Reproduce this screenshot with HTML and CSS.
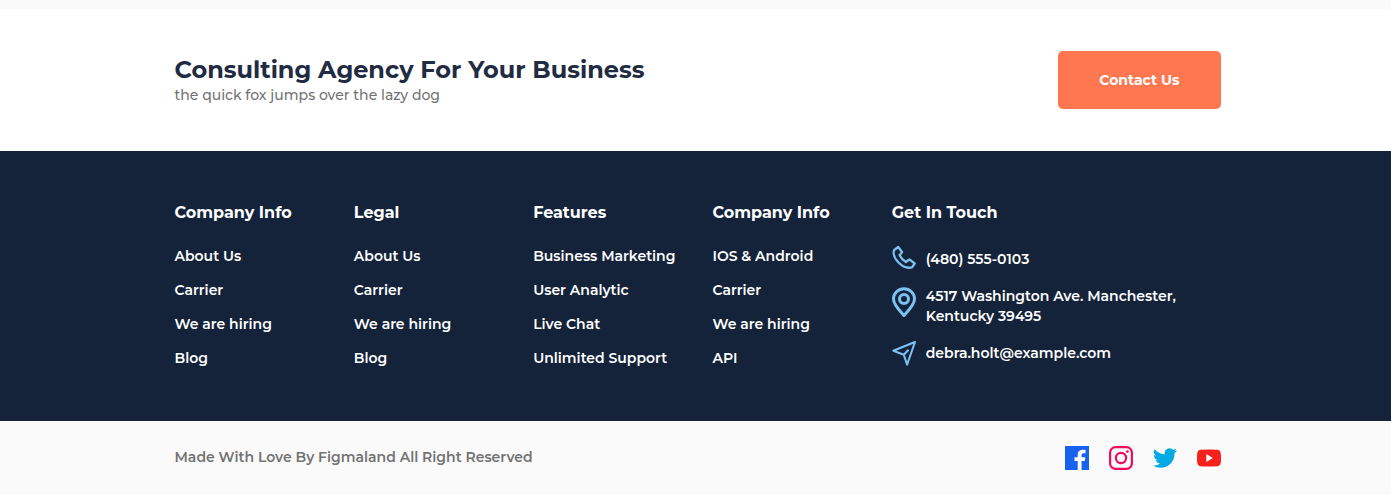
FILE: index.html
```html
<!DOCTYPE html>
<html lang="en">
<head>
<meta charset="utf-8">
<meta name="viewport" content="width=device-width, initial-scale=1">
<title>Consulting Agency</title>
<link rel="stylesheet" href="styles.css">
</head>
<body>
<section class="cta">
  <div class="container cta-row">
    <div>
      <h2 class="cta-title">Consulting Agency For Your Business</h2>
      <p class="cta-text">the quick fox jumps over the lazy dog</p>
    </div>
    <button class="cta-button" type="button">Contact Us</button>
  </div>
</section>
<footer>
  <div class="footer-main">
    <div class="container footer-grid">
      <nav aria-label="Company Info">
        <h3 class="column-title">Company Info</h3>
        <ul class="links">
          <li><a href="#">About Us</a></li>
          <li><a href="#">Carrier</a></li>
          <li><a href="#">We are hiring</a></li>
          <li><a href="#">Blog</a></li>
        </ul>
      </nav>
      <nav aria-label="Legal">
        <h3 class="column-title">Legal</h3>
        <ul class="links">
          <li><a href="#">About Us</a></li>
          <li><a href="#">Carrier</a></li>
          <li><a href="#">We are hiring</a></li>
          <li><a href="#">Blog</a></li>
        </ul>
      </nav>
      <nav aria-label="Features">
        <h3 class="column-title">Features</h3>
        <ul class="links">
          <li><a href="#">Business Marketing</a></li>
          <li><a href="#">User Analytic</a></li>
          <li><a href="#">Live Chat</a></li>
          <li><a href="#">Unlimited Support</a></li>
        </ul>
      </nav>
      <nav aria-label="Company Info">
        <h3 class="column-title">Company Info</h3>
        <ul class="links">
          <li><a href="#">IOS &amp; Android</a></li>
          <li><a href="#">Carrier</a></li>
          <li><a href="#">We are hiring</a></li>
          <li><a href="#">API</a></li>
        </ul>
      </nav>
      <div>
        <h3 class="column-title">Get In Touch</h3>
        <ul class="contacts">
          <li>
            <svg class="contact-icon" width="24" height="26" viewBox="0 1 24 26" aria-hidden="true"><path d="M6.200 2 2.100 5.100C.8 8.800 2.800 13.900 6.500 17.500c3.900 3.900 9 6.100 13.500 4.800l2.700-3.800-5.300-4.100-3.400 2.600C11.500 15.600 9 13 7.600 10.200L10.100 7.100Z" stroke-width="2.300"/></svg>
            <span>(480) 555-0103</span>
          </li>
          <li class="address">
            <svg class="contact-icon" width="24" height="31" viewBox="0 -1 24 31" aria-hidden="true"><path d="M12 28.500C9 25 1.500 18 1.500 12a10.500 10.200 0 0 1 21 0C22.500 18 15 25 12 28.500Z" stroke-width="3"/><circle cx="12" cy="12" r="4.500" stroke-width="3"/></svg>
            <span>4517 Washington Ave. Manchester,<br>Kentucky 39495</span>
          </li>
          <li>
            <svg class="contact-icon" width="24" height="26" viewBox="0 0 24 26" aria-hidden="true"><path d="M23 2 1.300 10.700l10.500 4 3.300 10ZM11.800 14.700 16.500 9.700" stroke-width="2"/></svg>
            <span>debra.holt@example.com</span>
          </li>
        </ul>
      </div>
    </div>
  </div>
  <div class="footer-bottom">
    <div class="container bottom-row">
      <p class="credit">Made With Love By Figmaland All Right Reserved</p>
      <div class="social">
        <a href="#" aria-label="Facebook"><svg width="24" height="24" viewBox="0 0 24 24"><path fill="#1763f0" d="M0 0h24v24h-7.400v-9.100h3.200l.5-3.700h-3.700V9c0-1.100.4-1.800 1.900-1.800h2V3.900c-4.800-.7-7.800.8-7.800 4.500v2.800H9.500v3.700h3.200V24H0Z"/></svg></a>
        <a href="#" aria-label="Instagram"><svg width="24" height="24" viewBox="0 0 24 24" fill="none" stroke="#f00c5b" stroke-width="2.200"><rect x="1.100" y="1.100" width="21.800" height="21.800" rx="5.500"/><circle cx="12" cy="12" r="5.100"/><circle cx="18.400" cy="5.600" r="1.400" fill="#f00c5b" stroke="none"/></svg></a>
        <a href="#" aria-label="Twitter"><svg width="24" height="24" viewBox="0 0 24 24"><path fill="#03a9e2" d="M23.950 4.570a10 10 0 0 1-2.820.78 4.960 4.960 0 0 0 2.160-2.730c-.95.560-2 .96-3.130 1.190a4.920 4.920 0 0 0-8.380 4.480C7.690 8.100 4.070 6.130 1.640 3.160a4.920 4.920 0 0 0 1.520 6.570 4.900 4.900 0 0 1-2.230-.61v.06a4.920 4.920 0 0 0 3.950 4.830 5 5 0 0 1-2.210.08 4.940 4.940 0 0 0 4.600 3.420A9.870 9.870 0 0 1 0 19.540a13.940 13.940 0 0 0 7.550 2.210c9.050 0 14-7.500 14-13.980 0-.21 0-.42-.02-.63a9.940 9.940 0 0 0 2.420-2.570Z"/></svg></a>
        <a href="#" aria-label="YouTube"><svg width="24" height="24" viewBox="0 0 24 24"><path fill="#f7201c" d="M3 3.800q9-.8 18 0Q23.300 4 23.700 7q.6 5 0 10-.4 2.900-2.700 3.200-9 .8-18 0Q.7 19.900.3 17q-.6-5 0-10Q.7 4.100 3 3.800Z"/><path fill="#fff" d="M9.300 8v8l6.500-4Z"/></svg></a>
      </div>
    </div>
  </div>
</footer>
</body>
</html>
```
FILE: styles.css
```css
* { box-sizing: border-box; }

body {
  margin: 0;
  padding-top: 9px;
  background: #fafafa;
  color: #fff;
  font: 600 14px/20px Montserrat, Inter, sans-serif;
}

h2, h3, p, ul { margin: 0; padding: 0; }
ul { list-style: none; }
a { color: inherit; text-decoration: none; }

.container {
  max-width: 1050px;
  margin: 0 auto;
  padding-left: 4px;
}

.cta { padding: 42px 0; background: #fff; }

.cta-row {
  display: flex;
  align-items: center;
  justify-content: space-between;
  gap: 24px;
}

.cta-title {
  color: #212b42;
  font-size: 24px;
  font-weight: 700;
  line-height: 30px;
}

.cta-text { color: #737373; font-weight: 500; }

.cta-button {
  padding: 18px 41px;
  border: 0;
  border-radius: 5px;
  background: #ff7750;
  color: #fff;
  font: inherit;
  font-weight: 700;
  line-height: 22px;
}

.footer-main { padding: 50px 0 39px; background: #14233a; }

.footer-grid {
  display: grid;
  grid-template-columns: repeat(4, 12fr) 22fr;
}

.column-title {
  margin-bottom: 21px;
  font-size: 16px;
  font-weight: 700;
  line-height: 24px;
}

.links li { padding-bottom: 14px; }
.links a { display: block; }

.contacts { display: grid; gap: 14px; }

.contacts li {
  display: flex;
  align-items: center;
  gap: 10px;
}

.contacts .address { align-items: flex-start; }

.contact-icon {
  flex: none;
  overflow: visible;
  fill: none;
  stroke: #7dc1f2;
  stroke-linejoin: round;
}

.footer-bottom { padding: 25px 0; }

.bottom-row {
  display: flex;
  align-items: flex-start;
  justify-content: space-between;
  gap: 24px;
}

.credit { color: #737373; line-height: 22px; }

.social { display: flex; gap: 20px; }
.social svg { display: block; }

@media (max-width: 900px) {
  .container { padding: 0 20px; }
  .footer-grid { grid-template-columns: 1fr 1fr; gap: 24px; }
}
```
